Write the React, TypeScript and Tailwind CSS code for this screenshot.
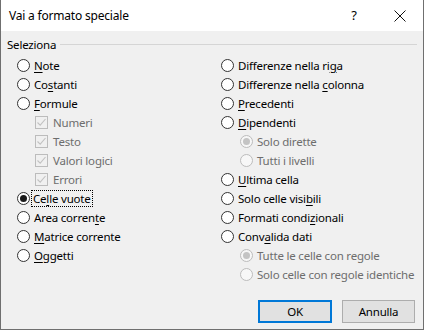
import React from "react";

type Item = {
  label: React.ReactNode;
  kind: "radio" | "check" | "subradio";
  checked?: boolean;
  disabled?: boolean;
  focus?: boolean;
};

// letter underlined as access key
const u = (before: string, key: string, after: string) => (
  <>
    {before}
    <span className="underline underline-offset-[2px]">{key}</span>
    {after}
  </>
);

const left: Item[] = [
  { label: u("", "N", "ote"), kind: "radio" },
  { label: u("Co", "s", "tanti"), kind: "radio" },
  { label: u("", "F", "ormule"), kind: "radio" },
  { label: "Numeri", kind: "check", checked: true, disabled: true },
  { label: "Testo", kind: "check", checked: true, disabled: true },
  { label: "Valori logici", kind: "check", checked: true, disabled: true },
  { label: "Errori", kind: "check", checked: true, disabled: true },
  { label: u("Ce", "l", "le vuote"), kind: "radio", checked: true, focus: true },
  { label: u("Area corren", "t", "e"), kind: "radio" },
  { label: u("", "M", "atrice corrente"), kind: "radio" },
  { label: u("", "O", "ggetti"), kind: "radio" },
];

const right: Item[] = [
  { label: u("Differenze nella ri", "g", "a"), kind: "radio" },
  { label: u("Differenze nella ", "c", "olonna"), kind: "radio" },
  { label: u("", "P", "recedenti"), kind: "radio" },
  { label: u("", "D", "ipendenti"), kind: "radio" },
  { label: "Solo dirette", kind: "subradio", checked: true, disabled: true },
  { label: "Tutti i livelli", kind: "subradio", disabled: true },
  { label: u("", "U", "ltima cella"), kind: "radio" },
  { label: u("Solo celle visi", "b", "ili"), kind: "radio" },
  { label: u("Formati condi", "z", "ionali"), kind: "radio" },
  { label: u("Conv", "a", "lida dati"), kind: "radio" },
  { label: "Tutte le celle con regole", kind: "subradio", checked: true, disabled: true },
  { label: "Solo celle con regole identiche", kind: "subradio", disabled: true },
];

function Radio({ checked, disabled }: { checked?: boolean; disabled?: boolean }) {
  return (
    <span
      className={
        "w-[13px] h-[13px] rounded-full border flex items-center justify-center shrink-0 " +
        (disabled ? "border-[#bcbcbc] bg-[#f7f7f7]" : "border-[#333333] bg-white")
      }
    >
      {checked && (
        <span
          className={
            "w-[7px] h-[7px] rounded-full " + (disabled ? "bg-[#c4c4c4]" : "bg-[#1a1a1a]")
          }
        />
      )}
    </span>
  );
}

function Check() {
  return (
    <span className="w-[13px] h-[13px] border border-[#bcbcbc] flex items-center justify-center shrink-0">
      <svg width="11" height="11" viewBox="0 0 11 11">
        <path d="M1.5 5.5 L4.2 8.2 L9.5 2" fill="none" stroke="#c2c2c2" strokeWidth="1.1" />
      </svg>
    </span>
  );
}

function Row({ item }: { item: Item }) {
  const text = item.disabled ? "text-[#6d6d6d]" : "text-black";
  if (item.kind === "check") {
    return (
      <div className="h-[19px] flex items-center pl-[18px]">
        <Check />
        <span className={"ml-[5px] whitespace-nowrap " + text}>{item.label}</span>
      </div>
    );
  }
  return (
    <div className={"h-[19px] flex items-center " + (item.kind === "subradio" ? "pl-[19px]" : "")}>
      <Radio checked={item.checked} disabled={item.disabled} />
      <span
        className={
          "whitespace-nowrap " +
          (item.focus ? "ml-[2px] px-[1px] outline outline-1 outline-dotted outline-black " : "ml-[4px] ") +
          text
        }
      >
        {item.label}
      </span>
    </div>
  );
}

export default function App() {
  return (
    <div
      className="w-[424px] h-[330px] flex flex-col border-x border-b border-[#6f6f6f] text-[11.5px] tracking-[-0.2px] leading-[15px]"
      style={{ fontFamily: '"Noto Sans", "Segoe UI", sans-serif' }}
    >
      <div className="h-[31px] bg-white flex items-center pl-[8px] shrink-0">
        <span className="flex-1 text-[12px] tracking-[-0.2px]">Vai a formato speciale</span>
        <span className="w-[14px] text-center mr-[33px] text-[13px]">?</span>
        <svg width="12" height="12" viewBox="0 0 12 12" className="mr-[17px]">
          <path d="M0.5 0.5 L11.5 11.5 M11.5 0.5 L0.5 11.5" stroke="#111" strokeWidth="1" />
        </svg>
      </div>
      <div className="flex-1 bg-[#f0f0f0] flex flex-col">
        <div className="flex items-center pl-[6px] pr-[6px] mt-[5px] h-[16px]">
          <span>Seleziona</span>
          <div className="flex-1 h-px bg-[#d5d5d5] ml-[4px]" />
        </div>
        <div className="grid grid-cols-[204px_1fr] pl-[16px] mt-[4px]">
          <div className="flex flex-col">
            {left.map((it, i) => (
              <Row key={i} item={it} />
            ))}
          </div>
          <div className="flex flex-col">
            {right.map((it, i) => (
              <Row key={i} item={it} />
            ))}
          </div>
        </div>
        <div className="flex justify-end gap-[10px] pr-[8px] mt-[16px]">
          <button className="w-[74px] h-[23px] border-2 border-[#0078d7] bg-[#e1e1e1] text-black">
            OK
          </button>
          <button className="w-[73px] h-[23px] border border-[#adadad] bg-[#e1e1e1] text-black">
            Annulla
          </button>
        </div>
      </div>
    </div>
  );
}
